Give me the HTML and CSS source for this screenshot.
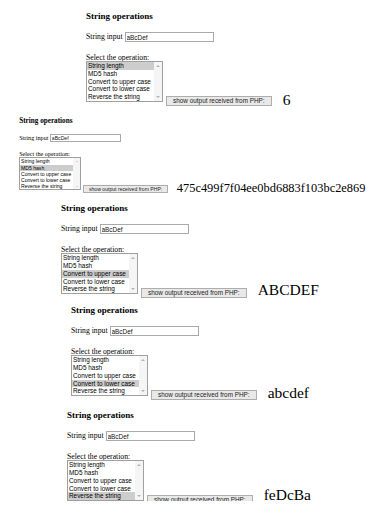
FILE: index.html
```html
<!DOCTYPE html>
<html lang="en">
<head>
    <meta charset="UTF-8">
    <meta name="viewport" content="width=device-width, initial-scale=1.0">
    <title>String operations</title>
    <link rel="stylesheet" href="styles.css">
</head>
<body>
    <!-- result: length -->
    <section class="panel p1">
        <h3>String operations</h3>
        <div class="field">String input <input type="text" value="aBcDef"></div>
        <div class="pick-label">Select the operation:</div>
        <div class="pick-row">
            <div class="listbox">
                <ul>
                    <li class="on">String length</li>
                    <li>MD5 hash</li>
                    <li>Convert to upper case</li>
                    <li>Convert to lower case</li>
                    <li>Reverse the string</li>
                </ul>
                <div class="scroll"><span class="up"></span><span class="down"></span></div>
            </div>
            <button type="button">show output received from PHP:</button>
            <span class="out">6</span>
        </div>
    </section>

    <!-- result: md5 -->
    <section class="panel p2">
        <h3>String operations</h3>
        <div class="field">String input <input type="text" value="aBcDef"></div>
        <div class="pick-label">Select the operation:</div>
        <div class="pick-row">
            <div class="listbox">
                <ul>
                    <li>String length</li>
                    <li class="on">MD5 hash</li>
                    <li>Convert to upper case</li>
                    <li>Convert to lower case</li>
                    <li>Reverse the string</li>
                </ul>
                <div class="scroll"><span class="up"></span><span class="down"></span></div>
            </div>
            <button type="button">show output received from PHP:</button>
            <span class="out">475c499f7f04ee0bd6883f103bc2e869</span>
        </div>
    </section>

    <!-- result: upper -->
    <section class="panel p3">
        <h3>String operations</h3>
        <div class="field">String input <input type="text" value="aBcDef"></div>
        <div class="pick-label">Select the operation:</div>
        <div class="pick-row">
            <div class="listbox">
                <ul>
                    <li>String length</li>
                    <li>MD5 hash</li>
                    <li class="on">Convert to upper case</li>
                    <li>Convert to lower case</li>
                    <li>Reverse the string</li>
                </ul>
                <div class="scroll"><span class="up"></span><span class="down"></span></div>
            </div>
            <button type="button">show output received from PHP:</button>
            <span class="out">ABCDEF</span>
        </div>
    </section>

    <!-- result: lower -->
    <section class="panel p4">
        <h3>String operations</h3>
        <div class="field">String input <input type="text" value="aBcDef"></div>
        <div class="pick-label">Select the operation:</div>
        <div class="pick-row">
            <div class="listbox">
                <ul>
                    <li>String length</li>
                    <li>MD5 hash</li>
                    <li>Convert to upper case</li>
                    <li class="on">Convert to lower case</li>
                    <li>Reverse the string</li>
                </ul>
                <div class="scroll"><span class="up"></span><span class="down"></span></div>
            </div>
            <button type="button">show output received from PHP:</button>
            <span class="out">abcdef</span>
        </div>
    </section>

    <!-- result: reverse -->
    <section class="panel p5">
        <h3>String operations</h3>
        <div class="field">String input <input type="text" value="aBcDef"></div>
        <div class="pick-label">Select the operation:</div>
        <div class="pick-row">
            <div class="listbox">
                <ul>
                    <li>String length</li>
                    <li>MD5 hash</li>
                    <li>Convert to upper case</li>
                    <li>Convert to lower case</li>
                    <li class="on">Reverse the string</li>
                </ul>
                <div class="scroll"><span class="up"></span><span class="down"></span></div>
            </div>
            <button type="button">show output received from PHP:</button>
            <span class="out">feDcBa</span>
        </div>
    </section>
</body>
</html>
```

FILE: styles.css
```css
body {
    margin: 0;
    background-color: #ffffff;
    color: #000000;
    font-family: 'Liberation Serif', 'Times New Roman', Times, serif;
}
.panel {
    font-size: 7.7px;
}
.panel h3 {
    font-size: 9px;
    line-height: 11px;
    font-weight: bold;
    margin: 0 0 10.5px;
}
.field {
    display: flex;
    align-items: center;
    gap: 2px;
    height: 10px;
    line-height: 10px;
    margin-bottom: 11.5px;
}
.field input {
    box-sizing: border-box;
    width: 89px;
    height: 10px;
    margin: 0;
    padding: 0 1px;
    border: 1px solid #a9a9a9;
    font: 6.4px 'Liberation Sans', Arial, sans-serif;
    color: #111;
}
.pick-label {
    line-height: 7.5px;
}
.pick-row {
    display: flex;
    align-items: flex-end;
}
.listbox {
    display: flex;
    box-sizing: border-box;
    width: 77px;
    height: 41px;
    border: 1px solid #a0a0a0;
}
.listbox ul {
    flex: 1;
    list-style: none;
    margin: 0;
    padding: 0;
    overflow: hidden;
    white-space: nowrap;
    font: 6.4px/7.8px 'Liberation Sans', Arial, sans-serif;
}
.listbox li {
    padding-left: 1px;
}
.listbox li.on {
    background-color: #cdcdcd;
}
.scroll {
    width: 8px;
    background-color: #f5f5f5;
    display: flex;
    flex-direction: column;
    justify-content: space-between;
    align-items: center;
    padding: 3px 0;
    box-sizing: border-box;
}
.scroll .up, .scroll .down {
    width: 0;
    height: 0;
    border-left: 2px solid transparent;
    border-right: 2px solid transparent;
}
.scroll .up {
    border-bottom: 2px solid #b4b4b4;
}
.scroll .down {
    border-top: 2px solid #b4b4b4;
}
.pick-row button {
    box-sizing: border-box;
    height: 10px;
    margin: 0 0 -4px 3px;
    padding: 0 6px;
    border: 1px solid #adadad;
    background-color: #e9e9e9;
    color: #222;
    font: 6.4px/8px 'Liberation Sans', Arial, sans-serif;
    white-space: nowrap;
}
.out {
    margin: 0 0 -4px 11px;
    font-size: 15.5px;
    line-height: 12px;
    white-space: nowrap;
}
.p1 {
    margin: 10.5px 0 0 86px;
}
.p2 {
    zoom: 0.8;
    margin: 18.75px 0 0 24px;
}
.p3 {
    margin: 12.5px 0 0 61px;
}
.p3 .out {
    margin-bottom: -2px;
}
.p4 {
    margin: 10.5px 0 0 71px;
}
.p4 .out {
    margin-bottom: -3px;
}
.p5 {
    margin: 13.5px 0 0 67px;
}
.p5 .out {
    margin-bottom: 0;
}
```
